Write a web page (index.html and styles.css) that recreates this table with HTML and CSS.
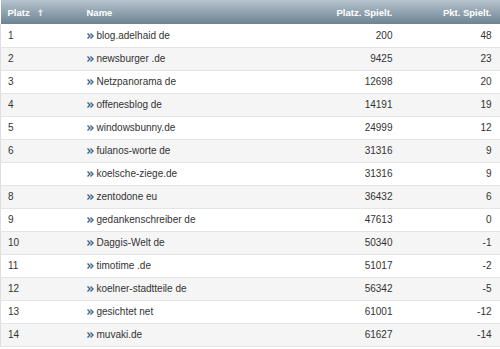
FILE: index.html
```html
<!DOCTYPE html>
<html>
<head>
<meta charset="utf-8">
<link rel="stylesheet" href="styles.css">
</head>
<body>
<table class="rank">
<colgroup><col class="w-platz"><col class="w-name"><col class="w-num"><col class="w-pkt"></colgroup>
<thead>
<tr>
<th class="c-platz">Platz <svg class="sort" width="5" height="7" viewBox="0 0 5 7"><path d="M2.5 0 L5 3 L3.3 3 L3.3 7 L1.7 7 L1.7 3 L0 3 Z" fill="#dfe6eb"/></svg></th>
<th class="c-name">Name</th>
<th class="c-num">Platz. Spielt.</th>
<th class="c-pkt">Pkt. Spielt.</th>
</tr>
</thead>
<tbody>
<tr><td class="c-platz">1</td><td class="c-name"><svg class="chev" width="7" height="6" viewBox="0 0 7 6"><path d="M0.5 0.5 L3 3 L0.5 5.5 M3.5 0.5 L6 3 L3.5 5.5" fill="none" stroke="#3d6287" stroke-width="1.4"/></svg>blog.adelhaid de</td><td class="c-num">200</td><td class="c-pkt">48</td></tr>
<tr><td class="c-platz">2</td><td class="c-name"><svg class="chev" width="7" height="6" viewBox="0 0 7 6"><path d="M0.5 0.5 L3 3 L0.5 5.5 M3.5 0.5 L6 3 L3.5 5.5" fill="none" stroke="#3d6287" stroke-width="1.4"/></svg>newsburger .de</td><td class="c-num">9425</td><td class="c-pkt">23</td></tr>
<tr><td class="c-platz">3</td><td class="c-name"><svg class="chev" width="7" height="6" viewBox="0 0 7 6"><path d="M0.5 0.5 L3 3 L0.5 5.5 M3.5 0.5 L6 3 L3.5 5.5" fill="none" stroke="#3d6287" stroke-width="1.4"/></svg>Netzpanorama de</td><td class="c-num">12698</td><td class="c-pkt">20</td></tr>
<tr><td class="c-platz">4</td><td class="c-name"><svg class="chev" width="7" height="6" viewBox="0 0 7 6"><path d="M0.5 0.5 L3 3 L0.5 5.5 M3.5 0.5 L6 3 L3.5 5.5" fill="none" stroke="#3d6287" stroke-width="1.4"/></svg>offenesblog de</td><td class="c-num">14191</td><td class="c-pkt">19</td></tr>
<tr><td class="c-platz">5</td><td class="c-name"><svg class="chev" width="7" height="6" viewBox="0 0 7 6"><path d="M0.5 0.5 L3 3 L0.5 5.5 M3.5 0.5 L6 3 L3.5 5.5" fill="none" stroke="#3d6287" stroke-width="1.4"/></svg>windowsbunny.de</td><td class="c-num">24999</td><td class="c-pkt">12</td></tr>
<tr><td class="c-platz">6</td><td class="c-name"><svg class="chev" width="7" height="6" viewBox="0 0 7 6"><path d="M0.5 0.5 L3 3 L0.5 5.5 M3.5 0.5 L6 3 L3.5 5.5" fill="none" stroke="#3d6287" stroke-width="1.4"/></svg>fulanos-worte de</td><td class="c-num">31316</td><td class="c-pkt">9</td></tr>
<tr><td class="c-platz"></td><td class="c-name"><svg class="chev" width="7" height="6" viewBox="0 0 7 6"><path d="M0.5 0.5 L3 3 L0.5 5.5 M3.5 0.5 L6 3 L3.5 5.5" fill="none" stroke="#3d6287" stroke-width="1.4"/></svg>koelsche-ziege.de</td><td class="c-num">31316</td><td class="c-pkt">9</td></tr>
<tr><td class="c-platz">8</td><td class="c-name"><svg class="chev" width="7" height="6" viewBox="0 0 7 6"><path d="M0.5 0.5 L3 3 L0.5 5.5 M3.5 0.5 L6 3 L3.5 5.5" fill="none" stroke="#3d6287" stroke-width="1.4"/></svg>zentodone eu</td><td class="c-num">36432</td><td class="c-pkt">6</td></tr>
<tr><td class="c-platz">9</td><td class="c-name"><svg class="chev" width="7" height="6" viewBox="0 0 7 6"><path d="M0.5 0.5 L3 3 L0.5 5.5 M3.5 0.5 L6 3 L3.5 5.5" fill="none" stroke="#3d6287" stroke-width="1.4"/></svg>gedankenschreiber de</td><td class="c-num">47613</td><td class="c-pkt">0</td></tr>
<tr><td class="c-platz">10</td><td class="c-name"><svg class="chev" width="7" height="6" viewBox="0 0 7 6"><path d="M0.5 0.5 L3 3 L0.5 5.5 M3.5 0.5 L6 3 L3.5 5.5" fill="none" stroke="#3d6287" stroke-width="1.4"/></svg>Daggis-Welt de</td><td class="c-num">50340</td><td class="c-pkt">-1</td></tr>
<tr><td class="c-platz">11</td><td class="c-name"><svg class="chev" width="7" height="6" viewBox="0 0 7 6"><path d="M0.5 0.5 L3 3 L0.5 5.5 M3.5 0.5 L6 3 L3.5 5.5" fill="none" stroke="#3d6287" stroke-width="1.4"/></svg>timotime .de</td><td class="c-num">51017</td><td class="c-pkt">-2</td></tr>
<tr><td class="c-platz">12</td><td class="c-name"><svg class="chev" width="7" height="6" viewBox="0 0 7 6"><path d="M0.5 0.5 L3 3 L0.5 5.5 M3.5 0.5 L6 3 L3.5 5.5" fill="none" stroke="#3d6287" stroke-width="1.4"/></svg>koelner-stadtteile de</td><td class="c-num">56342</td><td class="c-pkt">-5</td></tr>
<tr><td class="c-platz">13</td><td class="c-name"><svg class="chev" width="7" height="6" viewBox="0 0 7 6"><path d="M0.5 0.5 L3 3 L0.5 5.5 M3.5 0.5 L6 3 L3.5 5.5" fill="none" stroke="#3d6287" stroke-width="1.4"/></svg>gesichtet net</td><td class="c-num">61001</td><td class="c-pkt">-12</td></tr>
<tr><td class="c-platz">14</td><td class="c-name"><svg class="chev" width="7" height="6" viewBox="0 0 7 6"><path d="M0.5 0.5 L3 3 L0.5 5.5 M3.5 0.5 L6 3 L3.5 5.5" fill="none" stroke="#3d6287" stroke-width="1.4"/></svg>muvaki.de</td><td class="c-num">61627</td><td class="c-pkt">-14</td></tr>
</tbody>
</table>
</body>
</html>
```

FILE: styles.css
```css
html, body {
  margin: 0;
  padding: 0;
  background: #ffffff;
}
body {
  font-family: "Liberation Sans", Arial, sans-serif;
  font-size: 10px;
  color: #333333;
}
.rank {
  width: 500px;
  border-collapse: collapse;
  table-layout: fixed;
}
.w-platz { width: 80px; }
.w-name { width: 220px; }
.w-num { width: 100px; }
.w-pkt { width: 100px; }
.rank th,
.rank td {
  box-sizing: border-box;
  padding: 0;
  white-space: nowrap;
  overflow: visible;
}
.rank thead th {
  height: 24px;
  background: linear-gradient(#b6c4ce, #6d8392);
  color: #ffffff;
  font-size: 9.5px;
  font-weight: bold;
  text-align: left;
  vertical-align: middle;
}
.rank td {
  height: 23px;
  border-bottom: 1px solid #e4e4e4;
  vertical-align: middle;
}
.rank tbody tr:nth-child(even) td {
  background: #f5f5f5;
}
.rank td:first-child {
  border-left: 1px solid #dedede;
}
.rank .c-platz {
  padding-left: 7px;
}
.rank .c-name {
  padding-left: 6px;
}
.rank .c-num {
  text-align: right;
  padding-right: 8px;
}
.rank .c-pkt {
  text-align: right;
  padding-right: 9px;
}
.sort {
  margin-left: 6px;
  vertical-align: 0;
}
.chev {
  margin-right: 3px;
  vertical-align: 0;
}
```
